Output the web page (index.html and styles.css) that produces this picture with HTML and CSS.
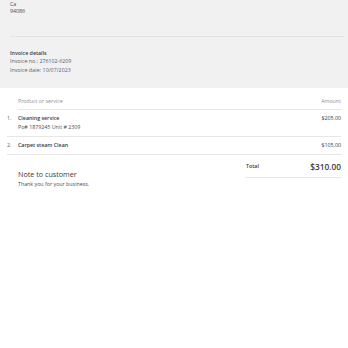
FILE: index.html
```html
<!DOCTYPE html>
<html>
<head>
<meta charset="utf-8">
<link rel="stylesheet" href="styles.css">
</head>
<body>
<div class="top">
  <div class="addr">
    <div>Ca</div>
    <div>94086</div>
  </div>
  <div class="divider"></div>
  <div class="details">
    <div class="dtitle">Invoice details</div>
    <div>Invoice no.: 276102-6209</div>
    <div>Invoice date: 10/07/2023</div>
  </div>
</div>
<div class="main">
  <div class="thead">
    <span>Product or service</span>
    <span>Amount</span>
  </div>
  <div class="row">
    <span class="num">1.</span>
    <div class="desc">
      <div class="name">Cleaning service</div>
      <div class="sub">Po# 1879245 Unit # 2309</div>
    </div>
    <span class="amt">$205.00</span>
  </div>
  <div class="row">
    <span class="num">2.</span>
    <div class="desc">
      <div class="name">Carpet steam Clean</div>
    </div>
    <span class="amt">$105.00</span>
  </div>
  <div class="foot">
    <div class="note">
      <div class="ntitle">Note to customer</div>
      <div class="ntext">Thank you for your business.</div>
    </div>
    <div class="total">
      <span class="tlabel">Total</span>
      <span class="tval">$310.00</span>
    </div>
  </div>
</div>
</body>
</html>
```
FILE: styles.css
```css
html, body {
  margin: 0;
  padding: 0;
  background: #ffffff;
  font-family: "Open Sans", "DejaVu Sans", sans-serif;
  color: #393a3d;
}
.top {
  background: #f1f1f1;
  padding: 0 4px 0 10px;
  height: 88px;
  box-sizing: border-box;
}
.addr {
  font-size: 5.3px;
  line-height: 7px;
  padding-top: 0.5px;
  color: #4a4b50;
}
.divider {
  height: 1px;
  background: #e3e3e3;
  margin-top: 21px;
}
.details {
  font-size: 5.3px;
  line-height: 8.5px;
  color: #5f6066;
  padding-top: 12px;
}
.dtitle {
  font-weight: 600;
  color: #393a3d;
}
.main {
  padding: 9px 7px 0 7px;
}
.thead {
  display: flex;
  justify-content: space-between;
  margin-left: 11px;
  font-size: 5.3px;
  line-height: 8px;
  color: #8d9096;
  padding-bottom: 4px;
  border-bottom: 1px solid #e6e6e6;
}
.row {
  display: flex;
  font-size: 5.3px;
  line-height: 8px;
  border-bottom: 1px solid #e6e6e6;
  padding: 4px 0 5px 0;
  color: #393a3d;
}
.num {
  width: 11px;
  color: #55575b;
}
.desc {
  flex: 1;
}
.name {
  font-weight: 600;
}
.sub {
  margin-top: 1px;
  color: #4a4b50;
}
.foot {
  display: flex;
  justify-content: space-between;
  align-items: flex-start;
  margin-left: 11px;
}
.note {
  padding-top: 15px;
}
.ntitle {
  font-size: 7.2px;
  line-height: 9px;
  color: #393a3d;
}
.ntext {
  font-size: 5.3px;
  line-height: 7px;
  margin-top: 2px;
  color: #4a4b50;
}
.total {
  width: 95px;
  display: flex;
  justify-content: space-between;
  align-items: center;
  border-bottom: 1px solid #e6e6e6;
  padding: 5.5px 0 5px 0;
  line-height: 11px;
}
.tlabel {
  font-size: 5.3px;
  font-weight: 600;
}
.tval {
  font-size: 8.3px;
  font-weight: 600;
}
```
